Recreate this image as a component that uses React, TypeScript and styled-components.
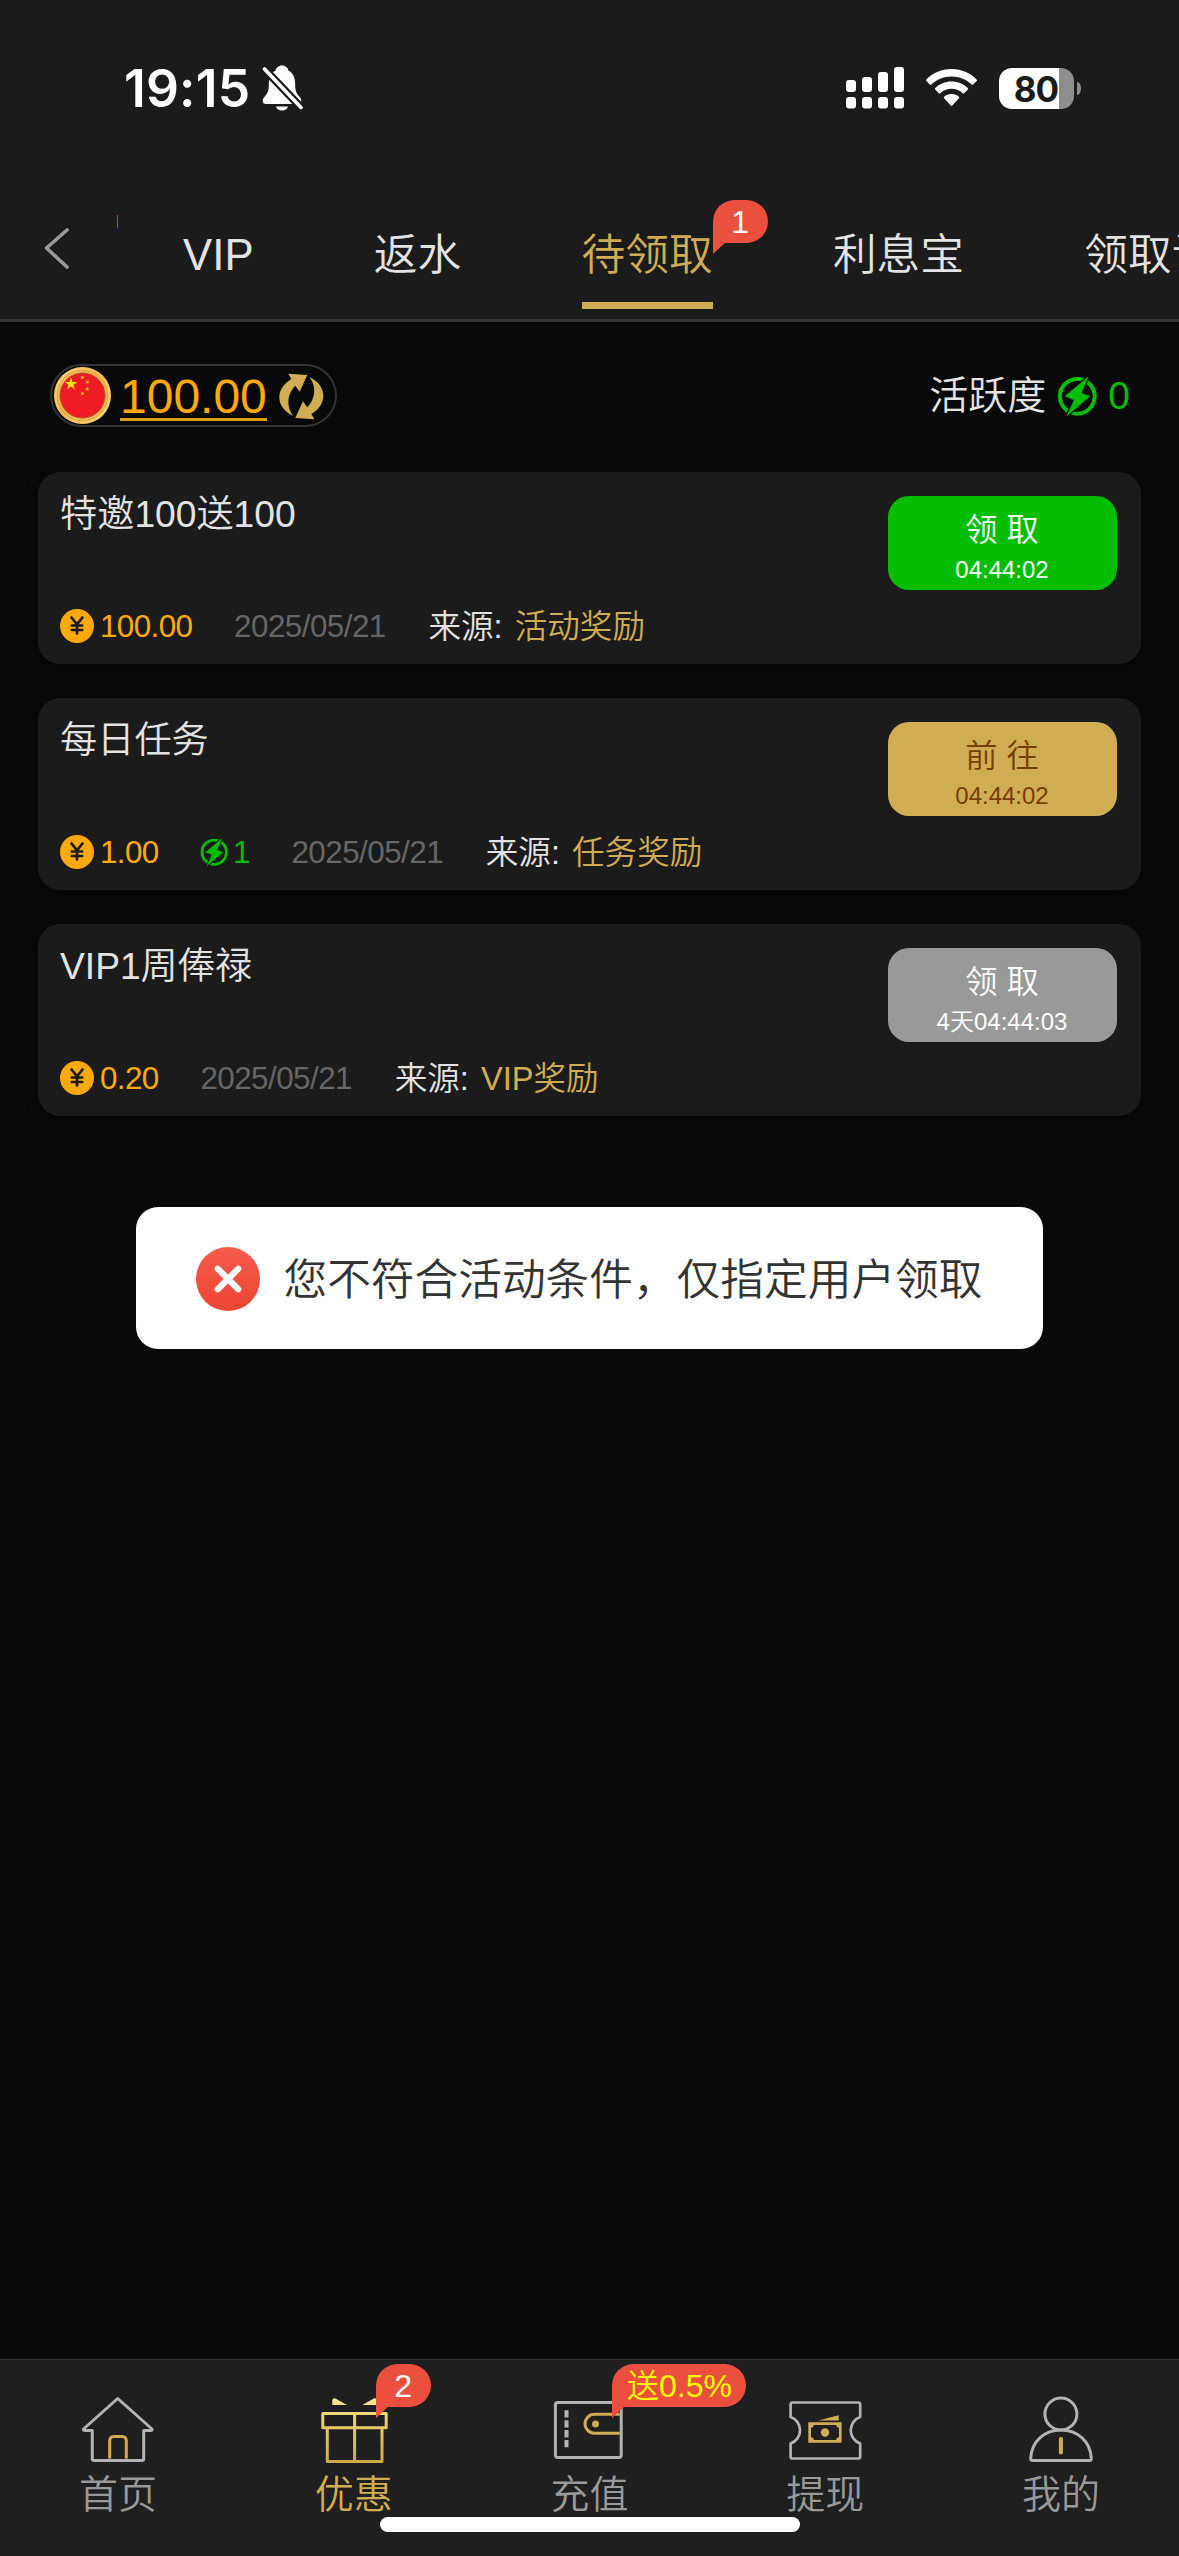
import React from "react";
import styled, { createGlobalStyle } from "styled-components";

const SANS = `"Liberation Sans", "Noto Sans CJK SC", sans-serif`;
const GOLD = "#d0ad52";
const RED = "#eb4f3d";

const GlobalStyle = createGlobalStyle`
  * { box-sizing: border-box; }
  body { margin: 0; background: #090909; font-family: ${SANS}; font-weight: 350; }
`;

const Page = styled.div`
  width: 1179px;
  height: 2556px;
  display: flex;
  flex-direction: column;
  background: #090909;
  overflow: hidden;
  position: relative;
  white-space: nowrap;
`;

const Header = styled.header`
  height: 322px;
  background: #1b1b1b;
  border-bottom: 3px solid #333;
  display: flex;
  flex-direction: column;
`;

const StatusBar = styled.div`
  height: 200px;
  padding: 63px 98px 0 124px;
  display: flex;
  justify-content: space-between;
  align-items: flex-start;
`;

const StatusGroup = styled.div<{ $gap: number }>`
  display: flex;
  align-items: center;
  height: 50px;
  gap: ${(p) => p.$gap}px;
`;

const Clock = styled.span`
  font: 600 51.5px/50px Inter, sans-serif;
  letter-spacing: 0.2px;
  width: 125px;
  color: #fff;
`;

const Battery = styled.div`
  width: 75px;
  height: 41px;
  border-radius: 13px;
  background: linear-gradient(90deg, #fff 60px, #8e8e8e 60px);
  color: #1b1b1b;
  font: 700 35px/42px Inter, sans-serif;
  letter-spacing: -1px;
  padding-right: 1px;
  text-align: center;
`;

const BatteryWrap = styled.div`
  display: flex;
  align-items: center;
  gap: 3px;
`;

const BatteryCap = styled.div`
  width: 4px;
  height: 13px;
  border-radius: 0 4px 4px 0 / 0 7px 7px 0;
  background: #8e8e8e;
`;

const TabRow = styled.nav`
  flex: 1;
  display: flex;
`;

const BackButton = styled.button`
  width: 117px;
  padding: 26px 0 0 42px;
  border: 0;
  background: none;
  display: flex;
  align-items: flex-start;
`;

const TabStrip = styled.div`
  flex: 1;
  display: flex;
  overflow: hidden;
  gap: 120.3px;
`;

const PastBadge = styled.div`
  width: 1px;
  height: 13px;
  margin: 15px -55.2px 0 0;
  flex: none;
  background: #c04434;
`;

const Tab = styled.div<{ $active?: boolean }>`
  flex: none;
  position: relative;
  height: 109px;
  padding-top: 28px;
  font-size: 43.7px;
  line-height: 54px;
  color: ${(p) => (p.$active ? GOLD : "#e3e3e3")};
  border-bottom: 7px solid ${(p) => (p.$active ? GOLD : "transparent")};
`;

const Bubble = styled.span<{ $x: string; $y: number; $w: number; $color?: string }>`
  position: absolute;
  left: ${(p) => p.$x};
  top: ${(p) => p.$y}px;
  width: ${(p) => p.$w}px;
  height: 43px;
  border-radius: 22px 22px 22px 0;
  background: ${RED};
  color: ${(p) => p.$color ?? "#fff"};
  font-size: 32px;
  line-height: 45px;
  text-align: center;
  &::after {
    content: "";
    position: absolute;
    left: 0;
    top: 42px;
    border-top: 12px solid ${RED};
    border-right: 13px solid transparent;
  }
`;

const Content = styled.main`
  flex: 1;
  padding: 42px 38px 0;
`;

const Summary = styled.div`
  display: flex;
  justify-content: space-between;
  align-items: center;
  height: 63px;
  padding: 0 11px 0 12px;
`;

const BalancePill = styled.div`
  height: 63px;
  width: 287px;
  border: 2px solid #333;
  border-radius: 32px;
  display: flex;
  align-items: center;
  padding-left: 2px;
`;

const Balance = styled.span`
  margin: 0 10px 0 9px;
  font-size: 48px;
  line-height: 53px;
  height: 51px;
  border-bottom: 3px solid #e09a12;
  color: #ffa90b;
`;

const Activity = styled.div`
  display: flex;
  align-items: center;
  font-size: 39px;
  line-height: 64px;
  color: #e3e3e3;
`;

const ActivityCount = styled.span`
  margin-left: 11px;
  color: #04be02;
`;

const IconSlot = styled.span`
  display: inline-flex;
  margin-left: 11px;
`;

const CardList = styled.section`
  display: flex;
  flex-direction: column;
  gap: 34px;
  margin-top: 45px;
`;

const Card = styled.article`
  height: 192px;
  border-radius: 22px;
  background: #1b1b1b;
  box-shadow: 0 3px 12px rgba(0, 0, 0, 0.5);
  padding: 18px 24px 13px 22px;
  display: flex;
  justify-content: space-between;
`;

const CardInfo = styled.div`
  display: flex;
  flex-direction: column;
  justify-content: space-between;
`;

const CardTitle = styled.div`
  font-size: 37.2px;
  line-height: 48px;
  color: #e3e3e3;
`;

const CardMeta = styled.div`
  display: flex;
  align-items: center;
  gap: 41.7px;
  height: 50px;
  line-height: 51px;
`;

const Amount = styled.span<{ $color: string; $gap: number }>`
  display: flex;
  align-items: center;
  gap: ${(p) => p.$gap}px;
  font-size: 31.4px;
  letter-spacing: -0.6px;
  color: ${(p) => p.$color};
`;

const DateText = styled.span`
  font-size: 31.4px;
  letter-spacing: -0.55px;
  color: #666;
`;

const Source = styled.span`
  margin-left: 1px;
  font-size: 32.6px;
  color: #e3e3e3;
`;

const SourceName = styled.span`
  margin-left: 3px;
  color: ${GOLD};
`;

const ClaimButton = styled.button<{ $bg: string; $fg: string }>`
  width: 229px;
  height: 94px;
  margin-top: 6px;
  border: 0;
  padding: 10px 1px 0 0;
  border-radius: 21px;
  background: ${(p) => p.$bg};
  color: ${(p) => p.$fg};
  font-family: ${SANS};
  font-weight: 350;
  display: flex;
  flex-direction: column;
  align-items: center;
`;

const ClaimLabel = styled.span`
  font-size: 32.3px;
  line-height: 48px;
`;

const ClaimTimer = styled.span`
  font-size: 24px;
  line-height: 31px;
`;

const Toast = styled.div`
  position: absolute;
  left: 136px;
  top: 1207px;
  width: 907px;
  height: 142px;
  border-radius: 22px;
  background: #fff;
  display: flex;
  align-items: center;
  justify-content: center;
  gap: 23px;
  padding: 2px 0 0 0;
  color: #333;
  font-size: 43.7px;
`;

const ToastText = styled.span`
  padding-top: 2px;
  line-height: 60px;
`;

const BottomBar = styled.nav`
  height: 197px;
  border-top: 1px solid #2d332f;
  background: #1f1f1f;
  display: grid;
  grid-template-columns: repeat(5, 1fr);
`;

const NavItem = styled.div<{ $active?: boolean }>`
  position: relative;
  display: flex;
  flex-direction: column;
  align-items: center;
  padding-top: 29px;
  font-size: 39px;
  line-height: 56px;
  color: ${(p) => (p.$active ? GOLD : "#999")};
`;

const NavLabel = styled.span``;

const HomeIndicator = styled.div`
  position: absolute;
  left: 380px;
  top: 2517px;
  width: 420px;
  height: 15px;
  border-radius: 8px;
  background: #fff;
`;

const MutedBell = () => (
  <svg width="42" height="46" viewBox="0 0 42 46">
    <path
      fill="#fff"
      d="M20 0.500c-3.500 0-6 2.400-6.400 5C8.500 8 6.800 13.500 6.800 19.500c0 7-1.300 9-4.500 12.500-3 3.200-1.500 7 1.700 7h32c3.200 0 4.500-3.800 1.700-7-3.200-3.500-4.500-5.500-4.500-12.500 0-6-1.700-11.500-6.800-14C26 2.900 23.500 0.500 20 0.500z"
    />
    <path fill="#fff" d="M14 41.500h12c-.7 2.600-3 4-6 4s-5.300-1.400-6-4z" />
    <path d="M1.500 3L39.500 43" stroke="#1b1b1b" strokeWidth="8" />
    <path d="M2.500 4L39 42.500" stroke="#fff" strokeWidth="3.600" strokeLinecap="round" />
  </svg>
);

const Signal = () => (
  <svg width="58" height="42" viewBox="0 0 58 42" fill="#fff">
    {[13, 10, 5, 0].map((y, i) => (
      <g key={i}>
        <rect x={i * 16} y={y} width="10" height={25 - y} rx="3" />
        <rect x={i * 16} y="30" width="10" height="11.500" rx="3" />
      </g>
    ))}
  </svg>
);

const Wifi = () => (
  <svg width="51" height="38" viewBox="0 0 51 38" fill="#fff">
    <path d="M25.500 0C36 0 45 4.200 50.600 10.500c.5.500.5 1 0 1.500l-3.400 3.500c-.5.500-1 .5-1.500 0C40.500 10.600 33.500 7.500 25.500 7.500S10.500 10.600 5.300 15.500c-.5.500-1 .5-1.500 0L.4 12c-.5-.5-.5-1 0-1.500C6 4.200 15 0 25.500 0z" />
    <path d="M25.500 12.500c6.500 0 12.200 2.500 16.300 6.600.5.500.5 1 0 1.500l-3.600 3.600c-.5.500-1 .5-1.500 0-2.900-2.700-6.700-4.400-11.200-4.400s-8.300 1.700-11.200 4.400c-.5.500-1 .5-1.500 0l-3.600-3.600c-.5-.5-.5-1 0-1.500 4.100-4.100 9.800-6.600 16.300-6.600z" />
    <path d="M25.500 25c3 0 5.500 1 7.400 2.700.5.500.5 1 0 1.500l-6.600 7.300c-.5.600-1.100.6-1.600 0l-6.600-7.300c-.5-.5-.5-1 0-1.500C20 26 22.500 25 25.500 25z" />
  </svg>
);

const Bolt = ({ size, bg }: { size: number; bg: string }) => {
  const shape = "M31 1L8 20.300L17.300 23.800L10 39.800L32.800 20.300L24.300 17.300Z";
  return (
    <svg width={size} height={size} viewBox="0 0 40 40">
      <circle cx="20.300" cy="20.300" r="17.400" fill="none" stroke="#04be02" strokeWidth="4" />
      <path d={shape} fill={bg} stroke={bg} strokeWidth="3" />
      <path d={shape} fill="#04be02" stroke="#04be02" strokeWidth="0.500" />
    </svg>
  );
};

const YuanCoin = () => (
  <svg width="34" height="34" viewBox="0 0 34 34">
    <circle cx="17" cy="17" r="17" fill="#ffa90b" />
    <path
      d="M11.500 8.500L17 15.300L22.500 8.500M17 15.300V24.500M11.800 16.500H22.200M11.800 21H22.200"
      fill="none"
      stroke="#1b1b1b"
      strokeWidth="2.700"
      strokeLinecap="round"
    />
  </svg>
);

const star = (cx: number, cy: number, r: number, turn = 0) =>
  Array.from({ length: 10 }, (_, i) => {
    const a = ((i * 36 - 90 + turn) * Math.PI) / 180;
    const d = i % 2 ? r * 0.4 : r;
    return `${cx + d * Math.cos(a)},${cy + d * Math.sin(a)}`;
  }).join(" ");

const FlagCoin = () => (
  <svg width="57" height="57" viewBox="0 0 57 57">
    <defs>
      <linearGradient id="rim" x1="0" y1="0" x2="1" y2="1">
        <stop offset="0" stopColor="#ffd772" />
        <stop offset="0.500" stopColor="#f5bc55" />
        <stop offset="1" stopColor="#ffdc7c" />
      </linearGradient>
    </defs>
    <circle cx="28.500" cy="28.500" r="28.500" fill="url(#rim)" />
    <circle cx="28.500" cy="28.500" r="25" fill="none" stroke="#e9a545" strokeWidth="1.500" />
    <circle cx="28.500" cy="28.500" r="22.700" fill="#f01c24" stroke="#a8672a" strokeWidth="0.800" />
    <g fill="#ffe600">
      <polygon points={star(17, 17, 6.5)} />
      <polygon points={star(28.5, 10.5, 2.2, 20)} />
      <polygon points={star(33.3, 15, 2.2, 40)} />
      <polygon points={star(33.3, 22, 2.2)} />
      <polygon points={star(28.5, 26.5, 2.2, 20)} />
    </g>
  </svg>
);

const Refresh = () => {
  const d = "M11.300 2.700L30.300 4L22.700 20.700L18.300 14.700C10 23 9 36 16.300 45C-1.500 37 -2.500 18 14.300 8Z";
  return (
    <svg width="48" height="50" viewBox="0 0 48 50" fill={GOLD}>
      <path d={d} />
      <path d={d} transform="rotate(180 24.3 25.5)" />
    </svg>
  );
};

const ErrorMark = () => (
  <svg width="64" height="64" viewBox="0 0 64 64">
    <defs>
      <linearGradient id="err" x1="0" y1="0" x2="0" y2="1">
        <stop offset="0" stopColor="#f75c4c" />
        <stop offset="1" stopColor="#ec4533" />
      </linearGradient>
    </defs>
    <circle cx="32" cy="32" r="32" fill="url(#err)" />
    <path d="M21.800 21.800L42.200 42.200M42.200 21.800L21.800 42.200" stroke="#fff" strokeWidth="6.200" strokeLinecap="round" />
  </svg>
);

const NavSvg = ({ children }: { children: React.ReactNode }) => (
  <svg width="78" height="78" viewBox="0 0 78 78" fill="none" stroke="#b3b3b3" strokeWidth="3" strokeLinejoin="round" strokeLinecap="round">
    {children}
  </svg>
);

const HomeIcon = () => (
  <NavSvg>
    <path d="M38.700 9.500L4.500 40Q4 41.500 6 41.500H13.300V69.700Q13.300 71.500 15.300 71.500H62.700Q64.700 71.500 64.700 69.700V41.500H71.500Q73.500 41.500 73 40Z" />
    <path d="M30.700 69.500V52Q30.700 47.500 35 47.500H43Q47.300 47.500 47.300 52V69.500" stroke={GOLD} strokeLinecap="butt" />
  </NavSvg>
);

const GiftIcon = () => (
  <NavSvg>
    <defs>
      <linearGradient id="gift" gradientUnits="userSpaceOnUse" x1="0" y1="9" x2="0" y2="73">
        <stop offset="0" stopColor="#f6e794" />
        <stop offset="0.400" stopColor="#e8cf66" />
        <stop offset="1" stopColor="#cfa748" />
      </linearGradient>
    </defs>
    <path d="M17.300 16V10.500L19.500 9L32 16ZM47.300 16L59.700 9L62 10.500V16Z" fill="url(#gift)" stroke="none" />
    <path d="M7.800 24.500H71.200V38.700H7.800ZM12.300 38.700V72.500H67V38.700M39.600 24.500V72.500" stroke="url(#gift)" />
  </NavSvg>
);

const WalletIcon = () => (
  <NavSvg>
    <rect x="5.400" y="13.500" width="65.800" height="55" rx="2.500" />
    <path d="M16.500 21.300V58.500" strokeWidth="4" strokeDasharray="7.300 2.600" strokeLinecap="butt" />
    <path d="M69.700 25.300H44.500A9.400 9.400 0 0 0 44.500 44.200H69.700" stroke={GOLD} strokeLinecap="butt" />
    <circle cx="45.500" cy="35" r="3.500" fill={GOLD} stroke="none" />
  </NavSvg>
);

const TicketIcon = () => (
  <NavSvg>
    <path
      strokeWidth="2.700"
      d="M4.600 28V15.500Q4.600 13.500 6.600 13.500H72.200Q74.200 13.500 74.200 15.500V28A14 14 0 0 0 74.200 54.500V67.500Q74.200 69.500 72.200 69.500H6.600Q4.600 69.500 4.600 67.500V54.500A14 14 0 0 0 4.600 28Z"
    />
    <path d="M32 31.500L52.700 26.300V31.500Z" fill={GOLD} stroke="none" />
    <path
      fillRule="evenodd"
      d="M22.300 33.300H55.600V53.700H22.300ZM28 36Q27.500 38.500 25 39V48Q27.500 48.500 28 51H50Q50.500 48.500 53 48V39Q50.500 38.500 50 36Z"
      fill={GOLD}
      stroke="none"
    />
    <circle cx="39" cy="43.500" r="4.200" fill={GOLD} stroke="none" />
  </NavSvg>
);

const PersonIcon = () => (
  <NavSvg>
    <circle cx="38.900" cy="25" r="16" />
    <path d="M38.900 41C55 41 68.500 52 69.300 69.500Q69.300 71.500 67.500 71.500H10.500Q8.700 71.500 8.700 69.500C9.500 52 23 41 38.900 41Z" />
    <path d="M38.900 50V63.500" stroke={GOLD} strokeWidth="4" />
  </NavSvg>
);

const rewards = [
  { title: "特邀100送100", amount: "100.00", date: "2025/05/21", source: "活动奖励", label: "领 取", timer: "04:44:02", bg: "#05be03", fg: "#fff" },
  { title: "每日任务", amount: "1.00", bolt: "1", date: "2025/05/21", source: "任务奖励", label: "前 往", timer: "04:44:02", bg: GOLD, fg: "#783c07" },
  { title: "VIP1周俸禄", amount: "0.20", date: "2025/05/21", source: "VIP奖励", label: "领 取", timer: "4天04:44:03", bg: "#999", fg: "#fff" },
];

export default function App() {
  return (
    <Page>
      <GlobalStyle />
      <Header>
        <StatusBar>
          <StatusGroup $gap={13}>
            <Clock>19:15</Clock>
            <MutedBell />
          </StatusGroup>
          <StatusGroup $gap={22}>
            <Signal />
            <Wifi />
            <BatteryWrap>
              <Battery>80</Battery>
              <BatteryCap />
            </BatteryWrap>
          </StatusGroup>
        </StatusBar>
        <TabRow>
          <BackButton>
            <svg width="30" height="44" viewBox="0 0 30 44" fill="none" stroke="#999" strokeWidth="3.600" strokeLinecap="round" strokeLinejoin="round">
              <path d="M25 4L4.500 22L25 41" />
            </svg>
          </BackButton>
          <TabStrip>
            <PastBadge />
            <Tab>VIP</Tab>
            <Tab>返水</Tab>
            <Tab $active>
              待领取
              <Bubble $x="100%" $y={0} $w={55}>1</Bubble>
            </Tab>
            <Tab>利息宝</Tab>
            <Tab>领取记录</Tab>
          </TabStrip>
        </TabRow>
      </Header>

      <Content>
        <Summary>
          <BalancePill>
            <FlagCoin />
            <Balance>100.00</Balance>
            <Refresh />
          </BalancePill>
          <Activity>
            活跃度
            <IconSlot>
              <Bolt size={40} bg="#090909" />
            </IconSlot>
            <ActivityCount>0</ActivityCount>
          </Activity>
        </Summary>

        <CardList>
          {rewards.map((r) => (
            <Card key={r.title}>
              <CardInfo>
                <CardTitle>{r.title}</CardTitle>
                <CardMeta>
                  <Amount $color="#ffa90b" $gap={6}>
                    <YuanCoin />
                    {r.amount}
                  </Amount>
                  {r.bolt && (
                    <Amount $color="#04be02" $gap={4.5}>
                      <Bolt size={28} bg="#1b1b1b" />
                      {r.bolt}
                    </Amount>
                  )}
                  <DateText>{r.date}</DateText>
                  <Source>
                    来源: <SourceName>{r.source}</SourceName>
                  </Source>
                </CardMeta>
              </CardInfo>
              <ClaimButton $bg={r.bg} $fg={r.fg}>
                <ClaimLabel>{r.label}</ClaimLabel>
                <ClaimTimer>{r.timer}</ClaimTimer>
              </ClaimButton>
            </Card>
          ))}
        </CardList>
      </Content>

      <BottomBar>
        <NavItem>
          <HomeIcon />
          <NavLabel>首页</NavLabel>
        </NavItem>
        <NavItem $active>
          <GiftIcon />
          <NavLabel>优惠</NavLabel>
          <Bubble $x="calc(50% + 22px)" $y={4} $w={55}>2</Bubble>
        </NavItem>
        <NavItem>
          <WalletIcon />
          <NavLabel>充值</NavLabel>
          <Bubble $x="calc(50% + 23px)" $y={4} $w={134} $color="#ff0">送0.5%</Bubble>
        </NavItem>
        <NavItem>
          <TicketIcon />
          <NavLabel>提现</NavLabel>
        </NavItem>
        <NavItem>
          <PersonIcon />
          <NavLabel>我的</NavLabel>
        </NavItem>
      </BottomBar>

      <Toast>
        <ErrorMark />
        <ToastText>您不符合活动条件，仅指定用户领取</ToastText>
      </Toast>
      <HomeIndicator />
    </Page>
  );
}
